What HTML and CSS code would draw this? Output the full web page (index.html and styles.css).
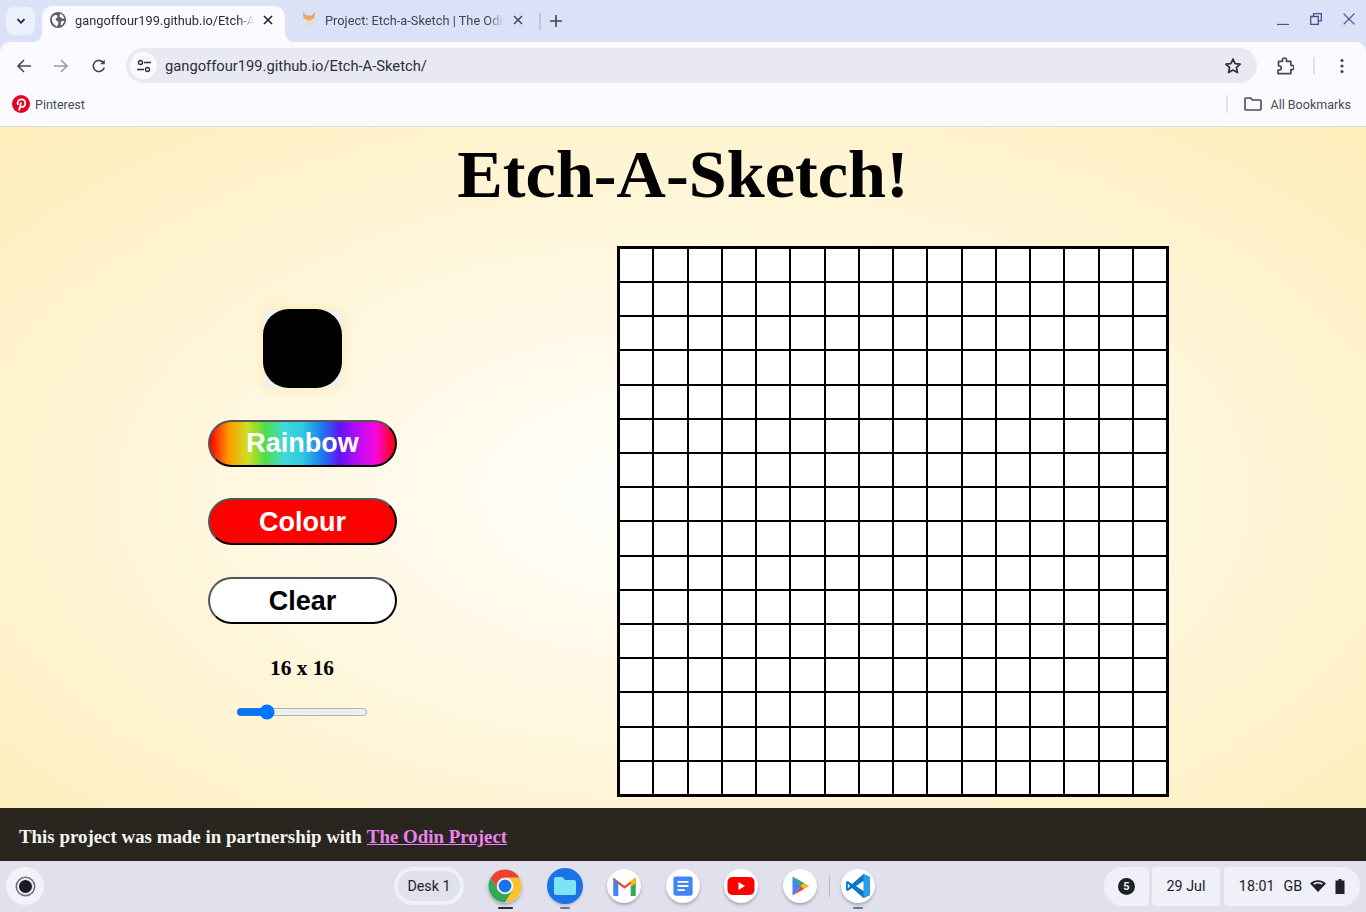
FILE: index.html
```html
<!DOCTYPE html>
<html lang="en">
<head>
  <meta charset="UTF-8" />
  <meta name="viewport" content="width=device-width,initial-scale=1" />
  <title>Etch-A-Sketch!</title>
  <link rel="stylesheet" href="styles.css">
</head>
<body>
  <!-- browser frame -->
  <header class="frame">
    <div class="tabstrip">
      <button class="tabsearch" aria-label="Search tabs">
        <svg width="12" height="12" viewBox="0 0 12 12"><path d="M2.5 4.2 6 7.8l3.5-3.6" fill="none" stroke="#1f2430" stroke-width="1.8"/></svg>
      </button>
      <div class="tab tab-active">
        <svg class="favicon" width="16" height="16" viewBox="0 0 16 16"><circle cx="8" cy="8" r="8" fill="#5f6368"/><path d="M2 5.2 5 3l2.6.6L7 6 5.4 6.6 6.6 9l1.8.4-.4 3-1.2 2C4 13 1.4 10 2 5.2ZM10.2 1.600l2.600 1.600 1.400 3-2.200.6-1-1.600-1.400-.4.6-3.200ZM11 9.400l2.600-.6.6 1.200-2.400 3.200-1.200-.2.4-3.600Z" fill="#fff"/></svg>
        <span class="tab-title">gangoffour199.github.io/Etch-A-Sketch/</span>
        <svg class="tab-close" width="10" height="10" viewBox="0 0 10 10"><path d="m1 1 8 8M9 1 1 9" stroke="#1f2430" stroke-width="1.6"/></svg>
      </div>
      <div class="tab tab-idle">
        <svg class="favicon" width="14" height="16" viewBox="0 0 14 16"><path d="M1 0 4.500 3.500h5L13 0l-.5 6L7 9.500 1.500 6Z" fill="#e8a861"/><path d="M2.500 6.500 7 9l4.500-2.500L10 12.500 7 16l-3-3.500Z" fill="#e4dccd"/></svg>
        <span class="tab-title">Project: Etch-a-Sketch | The Odin Project</span>
        <svg class="tab-close" width="10" height="10" viewBox="0 0 10 10"><path d="m1 1 8 8M9 1 1 9" stroke="#3f4556" stroke-width="1.500"/></svg>
      </div>
      <span class="tab-divider"></span>
      <svg class="newtab" width="12" height="12" viewBox="0 0 12 12"><path d="M6 0v12M0 6h12" stroke="#3f4556" stroke-width="1.600"/></svg>
      <div class="winbtns">
        <svg width="12" height="12" viewBox="0 0 12 12"><path d="M0 11.500h12" stroke="#41518c" stroke-width="1.300"/></svg>
        <svg width="12" height="12" viewBox="0 0 12 12"><path d="M3.500 3V.7h7.800v7.100H8.500M.7 3.500h7.600v7.800H.7Z" fill="none" stroke="#41518c" stroke-width="1.300"/></svg>
        <svg width="12" height="12" viewBox="0 0 12 12"><path d="m.6.6 10.800 10.800M11.400.6.6 11.400" stroke="#41518c" stroke-width="1.300"/></svg>
      </div>
    </div>

    <div class="toolbar">
      <svg width="16" height="16" viewBox="0 0 16 16"><path d="M15 8H2M8 2 2 8l6 6" fill="none" stroke="#474a55" stroke-width="1.600"/></svg>
      <svg class="nav-off" width="16" height="16" viewBox="0 0 16 16"><path d="M1 8h13M8 2l6 6-6 6" fill="none" stroke="#9a9ca6" stroke-width="1.600"/></svg>
      <svg width="16" height="16" viewBox="0 0 16 16"><path d="M13.300 9.500A5.600 5.600 0 1 1 12 4.100" fill="none" stroke="#474a55" stroke-width="1.600"/><path d="M13.800 1.500v4.700H9.100Z" fill="#474a55"/></svg>
      <div class="omnibox">
        <span class="site-info">
          <svg width="16" height="16" viewBox="0 0 16 16"><circle cx="4.500" cy="4.500" r="2" fill="none" stroke="#2f323b" stroke-width="1.400"/><circle cx="11.500" cy="11.500" r="2" fill="none" stroke="#2f323b" stroke-width="1.400"/><path d="M8 4.500h7M1 11.500h7" stroke="#2f323b" stroke-width="1.400"/></svg>
        </span>
        <span class="url">gangoffour199.github.io/Etch-A-Sketch/</span>
        <svg class="star" width="18" height="18" viewBox="0 0 18 18"><path d="m9 2 2.100 4.700 5.100.5-3.800 3.400 1.100 5L9 13l-4.500 2.600 1.100-5-3.800-3.400 5.100-.5Z" fill="none" stroke="#30323a" stroke-width="1.700" stroke-linejoin="round"/></svg>
      </div>
      <svg class="ext" width="18" height="18" viewBox="0 0 18 18"><path d="M2.500 4.300h4V3a2 2 0 0 1 4 0v1.300h4.300v4h1a2.200 2.200 0 0 1 0 4.400h-1v4H2v-3.500h1a2 2 0 0 0 0-4.400H2.500Z" fill="none" stroke="#474a55" stroke-width="1.700" stroke-linejoin="round"/></svg>
      <span class="bar-divider"></span>
      <svg class="kebab" width="4" height="16" viewBox="0 0 4 16"><circle cx="2" cy="2.500" r="1.600" fill="#474a55"/><circle cx="2" cy="8" r="1.600" fill="#474a55"/><circle cx="2" cy="13.500" r="1.600" fill="#474a55"/></svg>
    </div>

    <div class="bookmarks">
      <svg width="18" height="18" viewBox="0 0 18 18"><circle cx="9" cy="9" r="9" fill="#e60023"/><path d="M7.100 15.500 9 7.400M6 9.800C4.700 6.800 6.800 4.400 9.400 4.400c2.400 0 3.800 1.600 3.800 3.700 0 2.300-1.300 3.900-3 3.900-1 0-1.700-.6-1.800-1.300" fill="none" stroke="#fff" stroke-width="1.800"/></svg>
      <span class="bm-label">Pinterest</span>
      <span class="bm-divider"></span>
      <svg class="bm-folder" width="18" height="14" viewBox="0 0 18 14"><path d="M1 2a1 1 0 0 1 1-1h4.500l2 2H16a1 1 0 0 1 1 1v8a1 1 0 0 1-1 1H2a1 1 0 0 1-1-1Z" fill="none" stroke="#474a55" stroke-width="1.600"/></svg>
      <span class="bm-label">All Bookmarks</span>
    </div>
  </header>

  <!-- the page itself -->
  <div class="page">
    <h1>Etch-A-Sketch!</h1>
    <main class="sketch">
      <section class="controls">
        <div class="swatch"><div class="swatch-fill"></div></div>
        <button class="mode mode-rainbow">Rainbow</button>
        <button class="mode mode-colour">Colour</button>
        <button class="mode mode-clear">Clear</button>
        <p id="sizeLabel" class="size-label">16 x 16</p>
        <input id="sizeSlider" class="size-slider" type="range" min="2" max="72" value="16" />
      </section>
      <div id="board" class="board"></div>
    </main>
    <footer class="credit">
      This project was made in partnership with <a href="#">The Odin Project</a>
    </footer>
  </div>

  <!-- os shelf -->
  <nav class="shelf">
    <span class="launcher"><span class="launcher-dot"></span></span>
    <span class="desk">Desk 1</span>
    <div class="apps">
      <span class="app app-bare app-running">
        <svg width="36" height="36" viewBox="0 0 24 24"><path d="M12 6.500h9.530A11 11 0 0 0 2.470 6.500L7.240 14.750 12 12Z" fill="#ea4335"/><path d="M12 6.500h9.530A11 11 0 0 1 12 23l4.760-8.250L12 12Z" fill="#fbc02d"/><path d="M2.470 6.500A11 11 0 0 0 12 23l4.760-8.250H7.240Z" fill="#34a853"/><circle cx="12" cy="12" r="5.500" fill="#fff"/><circle cx="12" cy="12" r="4.300" fill="#1a73e8"/></svg>
      </span>
      <span class="app app-bare app-open">
        <svg width="36" height="36" viewBox="0 0 36 36"><circle cx="18" cy="18" r="18" fill="#1b73e8"/><path d="M7 11a2 2 0 0 1 2-2h6.500l2.500 3h9a2 2 0 0 1 2 2v11a2 2 0 0 1-2 2H9a2 2 0 0 1-2-2Z" fill="#7ce4f5"/></svg>
      </span>
      <span class="app">
        <svg width="27" height="27" viewBox="0 0 24 24"><path d="M2 6.500 12 14l10-7.500V4L12 11.500 2 4Z" fill="#ea4335"/><path d="M2 5v14.500a1 1 0 0 0 1 1h3.500V9Z" fill="#4285f4"/><path d="M22 5v14.500a1 1 0 0 1-1 1h-3.500V9Z" fill="#34a853"/><path d="m17.500 7.400 4.500-3.400c0-.2 0 3.500 0 5l-4.500 3.300Z" fill="#fbbc04"/></svg>
      </span>
      <span class="app app-docs">
        <svg width="22" height="22" viewBox="0 0 24 24"><rect x="1.500" y="1.500" width="21" height="21" rx="3" fill="#4285f4"/><path d="M6 7.500h12M6 12h12M6 16.500h8" stroke="#fff" stroke-width="2"/></svg>
      </span>
      <span class="app">
        <svg width="30" height="20" viewBox="0 0 30 20"><rect x="1.500" y="1" width="27" height="18" rx="5" fill="#f00"/><path d="m12.500 6 6.500 4-6.500 4Z" fill="#fff"/></svg>
      </span>
      <span class="app">
        <svg width="20" height="22" viewBox="0 0 24 26"><path d="M3 1.500 13.500 13 3 24.500Z" fill="#4285f4"/><path d="M3 1.500 17 9.300 13.500 13Z" fill="#34a853"/><path d="M3 24.500 17 16.700 13.500 13Z" fill="#ea4335"/><path d="m17 9.300 6 3.700-6 3.700-3.500-3.700Z" fill="#fbbc04"/></svg>
      </span>
      <span class="shelf-divider"></span>
      <span class="app app-open">
        <svg width="26" height="26" viewBox="0 0 26 26"><path d="M18.500 1 7 11 2.800 8 1 9v8l1.800 1L7 15l11.500 10L25 22V4Z" fill="#0a78c4"/><path d="M18.500 1 25 4v18l-6.500 3Z" fill="#24a0e8"/><path d="M18.500 8 11 13l7.500 5ZM2.800 10.500 5 13l-2.200 2.500Z" fill="#fff"/></svg>
      </span>
    </div>
    <div class="tray">
      <span class="tray-part tray-notif"><span class="notif-count">5</span></span>
      <span class="tray-part tray-date">29 Jul</span>
      <span class="tray-part tray-clock">
        <span>18:01</span><span class="tray-lang">GB</span>
        <svg width="16" height="12" viewBox="0 0 16 12"><path d="M0 3.500C4.500-.8 11.500-.8 16 3.500L8 12Z" fill="#1f2128"/><path d="M3.700 4C6.200 2.500 9.800 2.500 12.300 4" fill="none" stroke="#f0f0f8" stroke-width="1.500"/></svg>
        <svg width="10" height="15" viewBox="0 0 10 15"><path d="M3.500 0h3v1.500H9.500V15H.5V1.500h3Z" fill="#1f2128"/></svg>
      </span>
    </div>
  </nav>

  <script src="script.js"></script>
</body>
</html>
```

FILE: styles.css
```css
* { box-sizing: border-box; }
html, body { height: 100%; }
body { margin: 0; height: 912px; overflow: hidden; display: flex; flex-direction: column; font-family: Roboto, sans-serif; color: #1f2128; }

/* browser frame */
.frame { background: #dbe2f8; height: 127px; flex: none; }
.tabstrip { height: 42px; display: flex; align-items: flex-end; position: relative; }
.tabsearch { width: 29px; height: 28px; margin: 0 7px 7px 6px; padding: 0; border: none; border-radius: 8px; background: #ecf0fc; display: flex; align-items: center; justify-content: center; }
.tab { width: 243px; height: 36px; padding: 0 12px 8px 8px; display: flex; align-items: center; font-size: 12.800px; color: #3f4556; border-radius: 10px 10px 0 0; position: relative; }
.tab-active { background: #fafaff; color: #2c2f38; }
.tab-active::before, .tab-active::after { content: ""; position: absolute; bottom: 0; width: 10px; height: 10px; }
.tab-active::before { left: -10px; background: radial-gradient(circle at 0 0, #dbe2f8 10px, #fafaff 10.500px); }
.tab-active::after { right: -10px; background: radial-gradient(circle at 100% 0, #dbe2f8 10px, #fafaff 10.500px); }
.favicon { flex: none; margin-right: 9px; }
.tab-title { flex: 1; white-space: nowrap; overflow: hidden; -webkit-mask-image: linear-gradient(to left, transparent, #000 16px); mask-image: linear-gradient(to left, transparent, #000 16px); }
.tab-close { flex: none; margin-left: 9px; }
.tab-idle { width: 244px; padding-left: 17px; padding-right: 6px; }
.tab-idle .favicon { margin-right: 9px; }
.tab-divider { width: 2px; height: 17px; background: #b5c6f0; margin: 0 9px 12px 10px; }
.newtab { margin: 0 0 15px 0; }
.winbtns { margin-left: auto; padding: 0 11px 17px 0; display: flex; gap: 21px; }

.toolbar { height: 42px; background: #fafaff; border-radius: 10px 10px 0 0; display: flex; align-items: center; padding: 5px 0 0 16px; }
.toolbar > svg { flex: none; }
.nav-off { margin-left: 21px; }
.toolbar > svg:nth-child(3) { margin-left: 22px; }
.omnibox { flex: 1; height: 35px; margin: 0 19px; border-radius: 18px; background: #e8e9f3; display: flex; align-items: center; padding: 0 15px 0 4px; }
.site-info { width: 27px; height: 27px; border-radius: 50%; background: #fafaff; display: flex; align-items: center; justify-content: center; flex: none; }
.url { flex: 1; margin-left: 8px; font-size: 14.720px; color: #2c2f38; }
.bar-divider { width: 2px; height: 18px; background: #dbe2f8; margin: 0 25px 0 19px; flex: none; }
.kebab { margin-right: 22px; }

.bookmarks { height: 43px; background: #fafaff; border-bottom: 1px solid #dcdce4; display: flex; align-items: center; padding: 0 15px 2px 12px; }
.bm-label { font-size: 12.500px; color: #474a55; margin-left: 5px; }
.bm-divider { width: 2px; height: 18px; background: #dbe2f8; margin-left: auto; margin-right: 16px; }
.bm-folder { margin-right: 4px; }

/* page */
.page { flex: 1; min-height: 0; display: flex; flex-direction: column; background: radial-gradient(#fff, #ffeeba); }
h1 { margin: 0; padding-top: 7px; height: 118.900px; text-align: center; font-family: "Liberation Serif", serif; font-weight: 700; font-size: 68.300px; line-height: 80px; color: #000; }
.sketch { flex: 1; display: flex; gap: 12px; }
.controls { width: 605px; display: flex; flex-direction: column; align-items: center; padding-top: 63.100px; }
.swatch { width: 79px; height: 79px; background: #f1f0ea; box-shadow: 0 0 12px #ffe9ae; margin-right: 1px; }
.swatch-fill { width: 100%; height: 100%; background: #000; border-radius: 26px; }
.mode { width: 189px; height: 47px; flex: none; padding: 0; border-radius: 24px; border: 2px solid; border-color: #555 #000 #000 #555; font-family: "Liberation Sans", sans-serif; font-weight: 700; font-size: 27px; color: #fff; }
.mode-rainbow { margin: 32px 0 31px; background: linear-gradient(to right, #ff0000, #ff9a00, #d0de21, #4fdc4a, #3fdad8, #2fc9e2, #1c7fee, #5f15f2, #ba0cf8, #fb07d9, #ff0000); }
.mode-colour { margin-bottom: 32px; padding-top: 2px; background: #f00; }
.mode-clear { margin-bottom: 32px; padding-top: 2px; background: #fff; color: #000; }
.size-label { margin: 0 1px 0 0; font-family: "Liberation Serif", serif; font-weight: 700; font-size: 21.330px; line-height: 24px; color: #000; }
.size-slider { width: 132px; margin: 24px 1px 0 0; }
.board { width: 552px; height: 551px; flex: none; border: 2px solid #000; background: #fff; display: grid; grid-template-columns: repeat(16, 1fr); grid-template-rows: repeat(16, 1fr); }
.cell { border: 1px solid #000; min-width: 0; min-height: 0; }
.credit { height: 53px; flex: none; background: #28261f; color: #f5f5f5; font-family: "Liberation Serif", serif; font-weight: 700; font-size: 18.900px; padding: 4px 19px 0; display: flex; align-items: center; gap: 5px; }
.credit a { color: #ee82ee; }

/* os shelf */
.shelf { height: 51px; flex: none; background: #e0e1ec; display: flex; align-items: center; padding: 0 6px 1px; font-size: 14.300px; }
.launcher { width: 38px; height: 38px; border-radius: 50%; background: #f2f2f9; display: flex; align-items: center; justify-content: center; flex: none; }
.launcher-dot { width: 17px; height: 17px; border-radius: 50%; background: #191b22; border: 2px solid #e8e8ee; box-shadow: 0 0 0 1.500px #6d6e76; }
.desk { width: 70px; height: 38px; margin-left: 350px; border-radius: 19px; border: 4px solid #f0f0f8; display: flex; align-items: center; justify-content: center; flex: none; color: #1f2128; }
.apps { display: flex; align-items: center; margin-left: 24px; }
.app { width: 34px; height: 34px; margin-right: 25px; border-radius: 50%; background: #fff; box-shadow: 0 2px 3px rgba(60, 64, 80, .35); display: flex; align-items: center; justify-content: center; position: relative; flex: none; }
.app-bare { background: transparent; }
.app-bare svg { flex: none; }
.app-running { margin-right: 26px; }
.app-docs { margin-right: 24px; }
.app-running::after, .app-open::after { content: ""; position: absolute; top: 38px; left: 50%; height: 2px; border-radius: 1px; }
.app-running::after { width: 15px; margin-left: -7px; background: #2a2c33; }
.app-open::after { width: 10px; margin-left: -5px; background: #73757f; }
.shelf-divider { width: 1px; height: 22px; background: #b9bac4; margin: 0 11px 0 -13px; flex: none; }
.tray { margin-left: auto; display: flex; gap: 3px; height: 39px; }
.tray-part { background: #f0f0f8; border-radius: 4px; display: flex; align-items: center; justify-content: center; }
.tray-notif { width: 45px; border-radius: 19px 4px 4px 19px; }
.notif-count { width: 17px; height: 17px; border-radius: 50%; background: #1f2128; color: #f0f0f8; font-size: 11px; font-weight: 700; display: flex; align-items: center; justify-content: center; }
.tray-date { width: 68px; margin-right: 1px; }
.tray-clock { width: 136px; border-radius: 4px 19px 19px 4px; gap: 9px; }
.tray-lang { margin-right: -1px; }
```

FILE: script.js
```js
// build the board, redraw it when the slider moves
const board = document.getElementById('board');
const slider = document.getElementById('sizeSlider');
const label = document.getElementById('sizeLabel');

function buildBoard(size) {
  board.innerHTML = '';
  board.style.gridTemplateColumns = `repeat(${size}, 1fr)`;
  board.style.gridTemplateRows = `repeat(${size}, 1fr)`;
  for (let i = 0; i < size * size; i++) {
    const cell = document.createElement('div');
    cell.className = 'cell';
    board.appendChild(cell);
  }
  label.textContent = `${size} x ${size}`;
}

slider.addEventListener('input', () => buildBoard(Number(slider.value)));
board.addEventListener('mouseover', (e) => {
  if (e.target.classList.contains('cell')) e.target.style.background = '#000';
});

buildBoard(16);
```
